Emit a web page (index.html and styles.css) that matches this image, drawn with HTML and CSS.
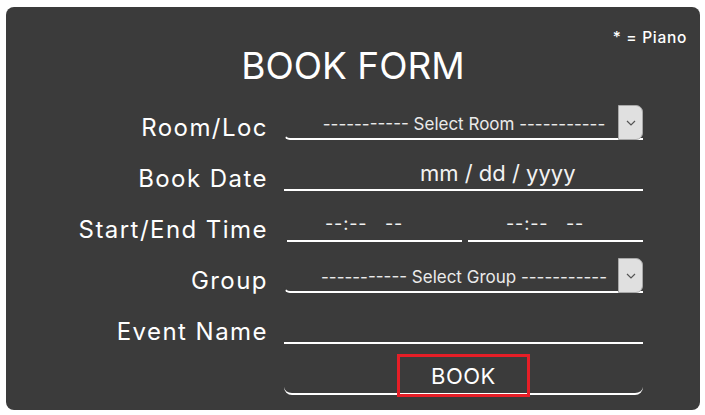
FILE: index.html
```html
<!DOCTYPE html>
<html lang="en">
<head>
<meta charset="utf-8">
<title>Book Form</title>
<link rel="stylesheet" href="styles.css">
</head>
<body>
<div class="card">
  <div class="legend">* = Piano</div>
  <h1 class="title">BOOK FORM</h1>
  <form class="form">
    <label class="label" for="room">Room/Loc</label>
    <div class="select-wrap">
      <select id="room" class="select">
        <option>----------- Select Room -----------</option>
      </select>
      <span class="arrow"><svg width="12" height="8" viewBox="0 0 12 8"><path d="M2 2 L6 6 L10 2" fill="none" stroke="#555" stroke-width="1.2"/></svg></span>
    </div>

    <label class="label" for="date">Book Date</label>
    <input id="date" class="field field-date" type="text" placeholder="mm / dd / yyyy">

    <label class="label" for="start">Start/End Time</label>
    <div class="time-pair">
      <input id="start" class="field field-time" type="text" placeholder="--:--&nbsp;&nbsp;&nbsp;--">
      <input id="end" class="field field-time" type="text" placeholder="--:--&nbsp;&nbsp;&nbsp;--">
    </div>

    <label class="label" for="group">Group</label>
    <div class="select-wrap">
      <select id="group" class="select">
        <option>----------- Select Group -----------</option>
      </select>
      <span class="arrow"><svg width="12" height="8" viewBox="0 0 12 8"><path d="M2 2 L6 6 L10 2" fill="none" stroke="#555" stroke-width="1.2"/></svg></span>
    </div>

    <label class="label" for="event">Event Name</label>
    <input id="event" class="field" type="text">

    <span></span>
    <button class="book" type="button"><span class="book-text">BOOK</span></button>
  </form>
</div>
</body>
</html>
```

FILE: styles.css
```css
* { box-sizing: border-box; }

body {
  margin: 0;
  background: #ffffff;
  font-family: "Inter", "Liberation Sans", sans-serif;
  color: #ffffff;
}

.card {
  position: relative;
  margin: 7px 0 0 6px;
  width: 694px;
  padding: 37px 0 15px 0;
  background: #3b3b3b;
  border-radius: 8px;
}

.legend {
  position: absolute;
  top: 22px;
  right: 13px;
  font-size: 15.5px;
  font-weight: 500;
  letter-spacing: 0.7px;
  line-height: 18px;
}

.title {
  margin: 0;
  text-align: center;
  font-size: 37px;
  font-weight: 400;
  line-height: 44px;
}

.form {
  margin-top: 17px;
  display: grid;
  grid-template-columns: 262px 359px;
  grid-auto-rows: 35px;
  column-gap: 16px;
  row-gap: 16px;
}

.label {
  align-self: end;
  text-align: right;
  font-size: 24px;
  line-height: 24px;
  letter-spacing: 1.45px;
  white-space: nowrap;
}

.field {
  width: 100%;
  height: 35px;
  background: transparent;
  border: none;
  border-bottom: 2px solid #ffffff;
  color: #ffffff;
  font-family: inherit;
  outline: none;
  padding: 0;
}

.field::placeholder { color: #f2f2f2; opacity: 1; }

.field-date {
  padding-left: 136px;
  font-size: 22px;
}

.time-pair {
  display: flex;
  gap: 6px;
  padding-left: 3px;
}

.field-time {
  flex: 1;
  padding-left: 38px;
  font-size: 18px;
  letter-spacing: 0.8px;
}

.select-wrap {
  position: relative;
  height: 35px;
}

.select {
  appearance: none;
  -webkit-appearance: none;
  width: 100%;
  height: 35px;
  background: transparent;
  border: none;
  border-bottom: 2px solid #ffffff;
  border-left: 1px solid #3b3b3b;
  border-radius: 0 0 0 6px;
  color: #eaeaea;
  font-family: inherit;
  font-size: 17px;
  letter-spacing: 0;
  text-align-last: center;
  padding: 4px 0 0 0;
  outline: none;
}

.arrow {
  position: absolute;
  top: 0;
  right: 0;
  width: 25px;
  height: 35px;
  background: #e0e0e0;
  border: 1px solid #a8a8a8;
  border-radius: 0 7px 7px 0;
  display: flex;
  align-items: center;
  justify-content: center;
}

.book {
  height: 35px;
  background: transparent;
  border: none;
  border-bottom: 2px solid #ffffff;
  border-radius: 0 0 8px 8px;
  display: flex;
  justify-content: center;
  align-items: flex-start;
  padding: 0;
  overflow: visible;
  cursor: pointer;
}

.book-text {
  width: 133px;
  height: 43px;
  margin-top: -6px;
  border: 3px solid #e61e27;
  display: flex;
  align-items: center;
  justify-content: center;
  color: #ffffff;
  font-family: "Inter", "Liberation Sans", sans-serif;
  font-size: 22px;
  letter-spacing: 0.5px;
}
```
